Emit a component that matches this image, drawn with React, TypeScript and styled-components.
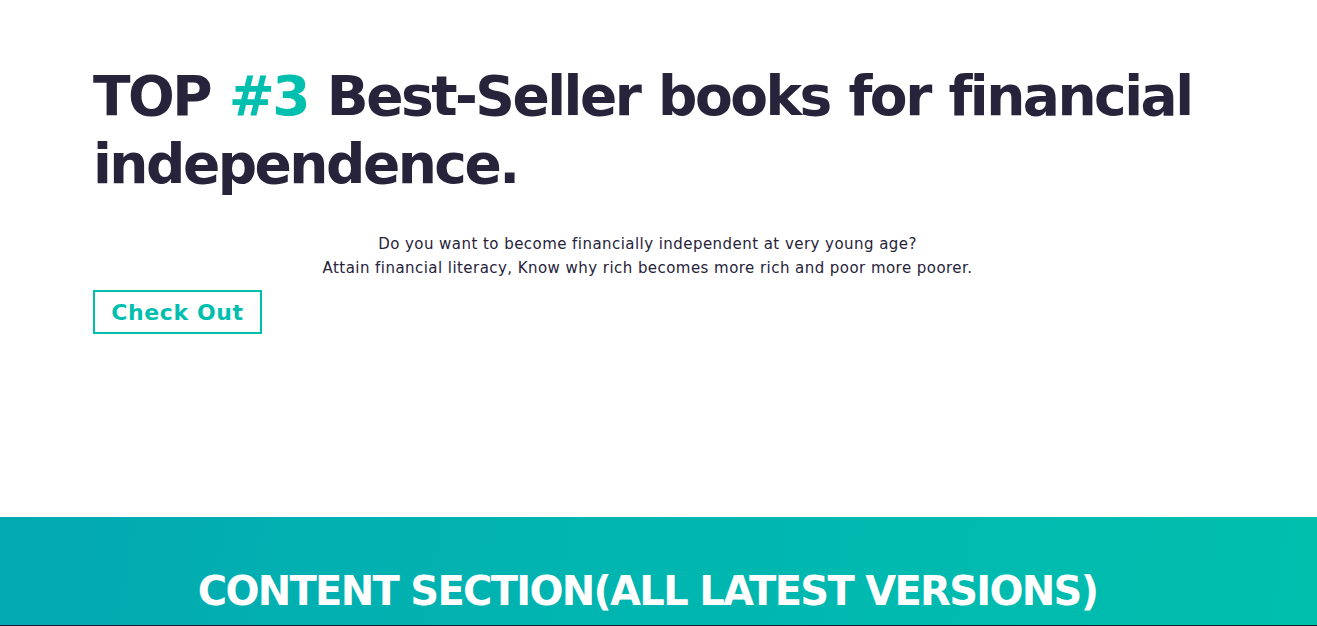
import React from "react";
import styled, { createGlobalStyle } from "styled-components";

const Global = createGlobalStyle`
  html, body { margin: 0; padding: 0; background: #ffffff; }
  body { font-family: "DejaVu Sans", "Noto Sans", sans-serif; color: #27233a; overflow: hidden; }
`;

const Page = styled.div`
  display: flex;
  flex-direction: column;
  width: 100%;
`;

const Hero = styled.section`
  height: 517px;
  display: flex;
  flex-direction: column;
  box-sizing: border-box;
  padding: 62px 0 0 93px;
`;

const Container = styled.div`
  width: 1109px;
  display: flex;
  flex-direction: column;
  align-items: flex-start;
`;

const Title = styled.h1`
  margin: 0 -12px 0 0;
  font-family: "DejaVu Sans", sans-serif;
  font-weight: 700;
  font-size: 55px;
  line-height: 68px;
  letter-spacing: -2.5px;
  word-spacing: 2px;
  color: #27233a;
`;

const Accent = styled.span`
  color: #00bfae;
`;

const Lead = styled.p`
  align-self: stretch;
  margin: 34px 0 10px;
  text-align: center;
  font-size: 15px;
  line-height: 24px;
  letter-spacing: 0.45px;
  color: #27233a;
`;

const OutlineButton = styled.a`
  display: inline-flex;
  align-items: center;
  justify-content: center;
  box-sizing: border-box;
  width: 169px;
  height: 44px;
  border: 2px solid #00bfae;
  color: #00bfae;
  font-weight: 700;
  font-size: 22px;
  letter-spacing: 0.6px;
  text-decoration: none;
  cursor: pointer;
`;

const Band = styled.section`
  height: 108px;
  background: linear-gradient(100deg, #03a9b1 0%, #00b6b0 50%, #00bfad 100%);
  display: flex;
  justify-content: flex-start;
  padding-left: 93px;
  box-sizing: border-box;
`;

const BandTitle = styled.h2`
  width: 1109px;
  margin: 52px 0 0;
  text-align: center;
  color: #ffffff;
  font-weight: 700;
  font-size: 40px;
  line-height: 44px;
  letter-spacing: -1.7px;
`;

const Dark = styled.div`
  height: 40px;
  background: #1f1d2b;
`;

export default function App() {
  return (
    <Page>
      <Global />
      <Hero>
        <Container>
          <Title>
            TOP <Accent>#3</Accent> Best-Seller books for financial independence.
          </Title>
          <Lead>
            Do you want to become financially independent at very young age?
            <br />
            Attain financial literacy, Know why rich becomes more rich and poor more poorer.
          </Lead>
          <OutlineButton>Check Out</OutlineButton>
        </Container>
      </Hero>
      <Band>
        <BandTitle>CONTENT SECTION(ALL LATEST VERSIONS)</BandTitle>
      </Band>
      <Dark />
    </Page>
  );
}
